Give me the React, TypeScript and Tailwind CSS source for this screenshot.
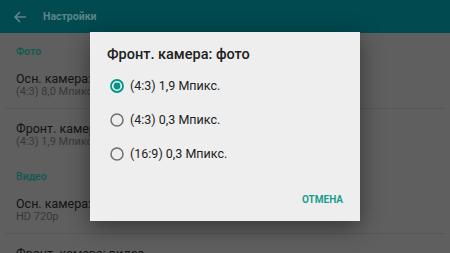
import React from 'react';

const font = { fontFamily: 'Roboto, "Noto Sans", sans-serif' };

const options = [
  { label: '(4:3) 1,9 Мпикс.', checked: true },
  { label: '(4:3) 0,3 Мпикс.', checked: false },
  { label: '(16:9) 0,3 Мпикс.', checked: false },
];

const Radio: React.FC<{ checked: boolean }> = ({ checked }) => (
  <svg width="14" height="14" viewBox="0 0 14 14" className="shrink-0">
    {checked ? (
      <>
        <circle cx="7" cy="7" r="6" fill="none" stroke="#009688" strokeWidth="1.8" />
        <circle cx="7" cy="7" r="3.4" fill="#009688" />
      </>
    ) : (
      <circle cx="7" cy="7" r="6" fill="none" stroke="#6f6f6f" strokeWidth="1.5" />
    )}
  </svg>
);

const Header: React.FC<{ text: string }> = ({ text }) => (
  <div className="h-[38px] flex items-center px-4 text-[10.5px] font-medium text-[#0e5a50]">{text}</div>
);

const Item: React.FC<{ title: string; sub: string; first?: boolean; divider?: boolean }> = ({
  title,
  sub,
  first,
  divider,
}) => (
  <div className={`${first ? 'pt-[1px]' : 'pt-[13px]'} pb-[10px] ${divider ? 'border-b border-[#575757] mx-[5px] px-[11px]' : 'px-4'}`}>
    <div className="text-[12.5px] leading-[14px] text-[#141414] whitespace-nowrap">{title}</div>
    <div className="text-[11px] leading-[12px] text-[#383838] whitespace-nowrap">{sub}</div>
  </div>
);

export default function App() {
  return (
    <div className="relative w-[450px] h-[253px] overflow-hidden bg-[#5f5f5f]" style={font}>
      {/* toolbar */}
      <div className="h-[33px] bg-[#004a50] flex items-center pl-[13px]">
        <svg width="14" height="14" viewBox="0 0 14 14">
          <path d="M13 7H2M7 2L2 7l5 5" fill="none" stroke="#5d8588" strokeWidth="1.6" />
        </svg>
        <span className="ml-[16px] text-[10.5px] font-bold text-[#5d8588]">Настройки</span>
      </div>

      <Header text="Фото" />
      <Item first divider title="Осн. камера: фото" sub="(4:3) 8,0 Мпикс." />
      <Item title="Фронт. камера: фото" sub="(4:3) 1,9 Мпикс." />
      <Header text="Видео" />
      <Item first divider title="Осн. камера: видео" sub="HD 720p" />
      <Item title="Фронт. камера: видео" sub="HD 720p" />

      {/* dialog */}
      <div className="absolute left-[90px] top-[32px] w-[270px] h-[189px] bg-[#eeeeee] shadow-[0_6px_22px_rgba(0,0,0,0.45)] flex flex-col">
        <div className="pt-[13px] pl-[17px] text-[14.5px] leading-[20px] font-medium text-[#212121]">
          Фронт. камера: фото
        </div>
        <div className="mt-[4px] flex flex-col">
          {options.map((o) => (
            <div key={o.label} className="h-[34px] flex items-center pl-[20px] gap-[6px]">
              <Radio checked={o.checked} />
              <span className="text-[12.5px] text-[#222222]">{o.label}</span>
            </div>
          ))}
        </div>
        <div className="mt-[10px] h-[36px] flex items-center justify-end pr-[17px]">
          <span className="text-[10px] font-bold text-[#1a9e8f]">ОТМЕНА</span>
        </div>
      </div>
    </div>
  );
}
